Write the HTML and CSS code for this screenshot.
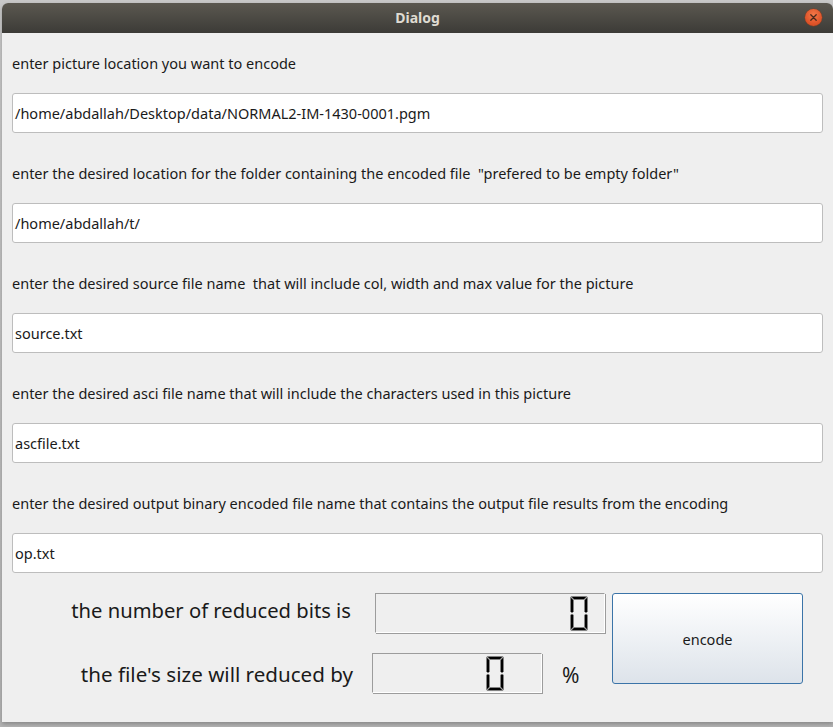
FILE: index.html
```html
<!DOCTYPE html>
<html>
<head>
<meta charset="utf-8">
<link rel="stylesheet" href="styles.css">
</head>
<body>
<div class="window">
  <div class="titlebar">
    <span class="title">Dialog</span>
    <span class="close"><svg width="17" height="17" viewBox="0 0 17 17"><path d="M5.8 5.8 L11.2 11.2 M11.2 5.8 L5.8 11.2" stroke="#4a2a1c" stroke-width="1.3" stroke-linecap="round"/></svg></span>
  </div>
  <div class="content">
    <div class="field first">
      <div class="label">enter picture location you want to encode</div>
      <div class="input">/home/abdallah/Desktop/data/NORMAL2-IM-1430-0001.pgm</div>
    </div>
    <div class="field">
      <div class="label">enter the desired location for the folder containing the encoded file&nbsp; "prefered to be empty folder"</div>
      <div class="input">/home/abdallah/t/</div>
    </div>
    <div class="field">
      <div class="label">enter the desired source file name&nbsp; that will include col, width and max value for the picture</div>
      <div class="input">source.txt</div>
    </div>
    <div class="field">
      <div class="label">enter the desired asci file name that will include the characters used in this picture</div>
      <div class="input">ascfile.txt</div>
    </div>
    <div class="field">
      <div class="label">enter the desired output binary encoded file name that contains the output file results from the encoding</div>
      <div class="input">op.txt</div>
    </div>
    <div class="bottom">
      <div class="rows">
        <div class="row row1">
          <div class="big-label">the number of reduced bits is</div>
          <div class="lcd lcd1">
            <svg class="digit" width="18" height="35" viewBox="0 0 18 35">
              <g fill="#000" stroke="#8a8a8a" stroke-width="0.6">
                <polygon points="1,0.5 17,0.5 14,3.5 4,3.5"/>
                <polygon points="0.5,1 3.5,4 3.5,15.5 2,17 0.5,15.5"/>
                <polygon points="17.5,1 14.5,4 14.5,15.5 16,17 17.5,15.5"/>
                <polygon points="0.5,19 2,18 3.5,19 3.5,31 0.5,34"/>
                <polygon points="17.5,19 16,18 14.5,19 14.5,31 17.5,34"/>
                <polygon points="4,31.5 14,31.5 17,34.5 1,34.5"/>
              </g>
            </svg>
          </div>
        </div>
        <div class="row row2">
          <div class="big-label l2">the file's size will reduced by</div>
          <div class="lcd lcd2">
            <svg class="digit" width="18" height="35" viewBox="0 0 18 35">
              <g fill="#000" stroke="#8a8a8a" stroke-width="0.6">
                <polygon points="1,0.5 17,0.5 14,3.5 4,3.5"/>
                <polygon points="0.5,1 3.5,4 3.5,15.5 2,17 0.5,15.5"/>
                <polygon points="17.5,1 14.5,4 14.5,15.5 16,17 17.5,15.5"/>
                <polygon points="0.5,19 2,18 3.5,19 3.5,31 0.5,34"/>
                <polygon points="17.5,19 16,18 14.5,19 14.5,31 17.5,34"/>
                <polygon points="4,31.5 14,31.5 17,34.5 1,34.5"/>
              </g>
            </svg>
          </div>
          <div class="percent">%</div>
        </div>
      </div>
      <button class="encode">encode</button>
    </div>
  </div>
</div>
</body>
</html>
```

FILE: styles.css
```css
html, body {
  margin: 0;
  padding: 0;
}
body {
  width: 833px;
  height: 727px;
  background: linear-gradient(to bottom, #c9c9c9 0px, #b4b4b4 100%);
  font-family: "Noto Sans", "DejaVu Sans", sans-serif;
  overflow: hidden;
}
.window {
  margin-left: 2px;
  margin-top: 3px;
  width: 831px;
  height: 719px;
  background: #efefef;
  border-radius: 6px 6px 0 0;
  overflow: hidden;
  box-shadow: 0 2px 4px rgba(0,0,0,0.25);
}
.titlebar {
  height: 30px;
  background: linear-gradient(to bottom, #5b5850 0%, #3c3b37 100%);
  display: flex;
  align-items: center;
  justify-content: center;
  position: relative;
}
.title {
  color: #dfdbd2;
  font-weight: bold;
  font-size: 14px;
  font-family: "Noto Sans", "DejaVu Sans", sans-serif;
  margin-top: -2px;
}
.close {
  position: absolute;
  left: 803px;
  top: 6px;
  width: 17px;
  height: 17px;
  border-radius: 50%;
  background: radial-gradient(circle at 50% 35%, #f47a4a 0%, #e0552a 60%, #c8441c 100%);
  box-shadow: 0 0 0 0.5px #8a3a1c;
}
.close svg {
  display: block;
}
.content {
  padding: 20px 8px 0 10px;
  width: 811px;
}
.field {
  margin-top: 30px;
}
.field.first {
  margin-top: 0;
}
.label {
  height: 20px;
  line-height: 20px;
  font-size: 14.5px;
  color: #1a1a1a;
  margin-bottom: 20px;
  white-space: nowrap;
}
.input {
  height: 38px;
  line-height: 38px;
  background: #ffffff;
  border: 1px solid #bdbdbd;
  border-radius: 3px;
  padding-left: 2px;
  font-size: 14.5px;
  color: #1a1a1a;
}
.bottom {
  margin-top: 20px;
  display: flex;
  align-items: flex-start;
}
.rows {
  display: flex;
  flex-direction: column;
  gap: 20px;
}
.row {
  display: flex;
  align-items: center;
  height: 40px;
}
.big-label {
  font-size: 20.2px;
  color: #1a1a1a;
  text-align: right;
  white-space: nowrap;
  width: 339px;
  margin-right: 24px;
  padding-bottom: 6px;
}
.big-label.l2 {
  width: 341px;
  margin-right: 19px;
  padding-bottom: 0;
  padding-top: 2px;
  font-size: 20.6px;
}
.lcd {
  box-sizing: border-box;
  height: 40px;
  border-top: 1px solid #9c9c9c;
  border-left: 1px solid #9c9c9c;
  border-right: 1px solid #ffffff;
  border-bottom: 1px solid #ffffff;
  box-shadow: 1px 1px 0 #9c9c9c;
  display: flex;
  align-items: center;
  justify-content: flex-end;
  background: #efefef;
}
.lcd1 {
  width: 230px;
  padding-right: 16px;
}
.lcd2 {
  width: 170px;
  padding-right: 37px;
}
.digit {
  display: block;
}
.percent {
  font-size: 21px;
  color: #1a1a1a;
  margin-left: 20px;
  padding-top: 4px;
}
.encode {
  margin-left: 7px;
  width: 191px;
  height: 91px;
  border: 1px solid #3b74a8;
  border-radius: 3px;
  background: linear-gradient(to bottom, #ffffff 0%, #dde3ea 100%);
  font-family: "Noto Sans", "DejaVu Sans", sans-serif;
  font-size: 14.5px;
  color: #1a1a1a;
  padding: 0;
}
```
